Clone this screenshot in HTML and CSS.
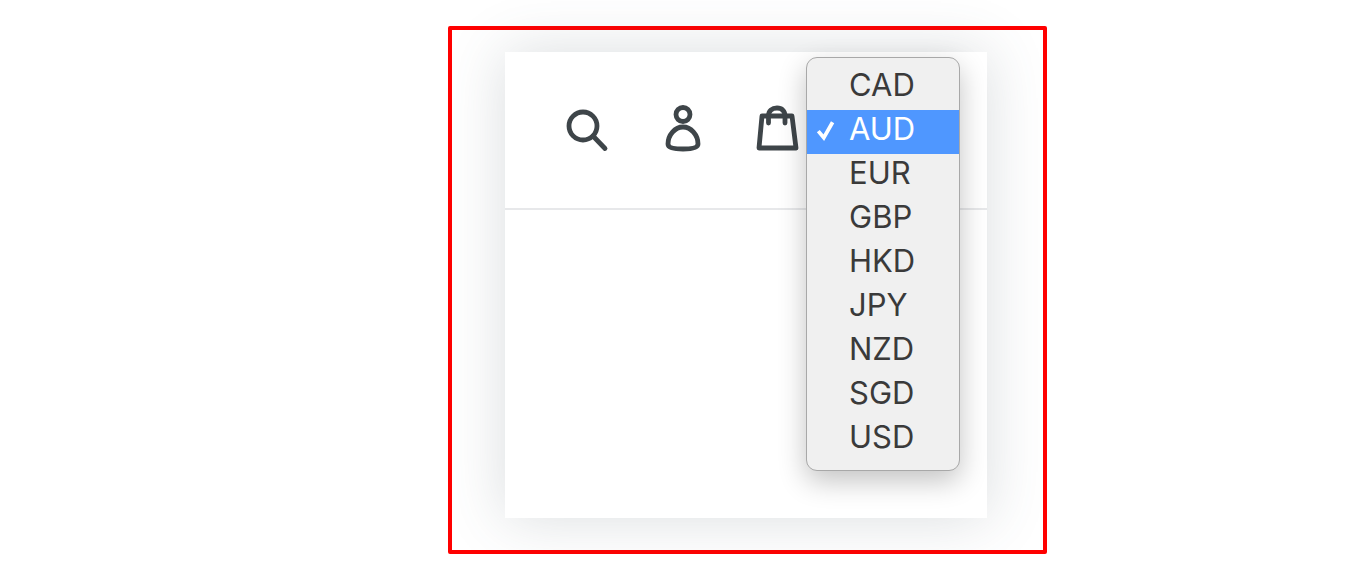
FILE: index.html
```html
<!DOCTYPE html>
<html lang="en">
<head>
    <meta charset="UTF-8">
    <meta name="viewport" content="width=device-width, initial-scale=1.0">
    <title>Currency menu</title>
    <link rel="stylesheet" href="styles.css">
</head>
<body>
    <div class="frame">
        <div class="panel">
            <div class="header">
                <svg class="icon" viewBox="0 0 48 52">
                    <circle cx="21" cy="23" r="14"/>
                    <path d="M31 33 L43 45.500"/>
                </svg>
                <svg class="icon" viewBox="0 0 48 52">
                    <circle cx="25" cy="11.500" r="7"/>
                    <path d="M25 24 C33 24 40 32 40 41 C40 44.500 35 46 25 46 C15 46 10 44.500 10 41 C10 32 17 24 25 24 Z"/>
                </svg>
                <svg class="icon" viewBox="0 0 48 52">
                    <path d="M8 13 H38 L42 45 H5 Z"/>
                    <path d="M14.500 20 V13 C14.500 8 18 5 23 5 C28 5 31 8 31 13 V20"/>
                </svg>
            </div>
            <ul class="menu">
                <li class="menu-item">CAD</li>
                <li class="menu-item selected">
                    <svg class="check" viewBox="0 0 20 20"><path d="M3 11 L8 17 L16 3"/></svg>
                    AUD
                </li>
                <li class="menu-item">EUR</li>
                <li class="menu-item">GBP</li>
                <li class="menu-item">HKD</li>
                <li class="menu-item">JPY</li>
                <li class="menu-item">NZD</li>
                <li class="menu-item">SGD</li>
                <li class="menu-item">USD</li>
            </ul>
        </div>
    </div>
</body>
</html>
```

FILE: styles.css
```css
body {
    margin: 0;
    background-color: #fff;
    font-family: "Inter", "Liberation Sans", sans-serif;
}
.frame {
    box-sizing: border-box;
    width: 599px;
    height: 528px;
    margin: 26px 0 0 448px;
    padding: 22px 0 0 53px;
    border: 4px solid #f00;
    border-radius: 2px;
}
.panel {
    position: relative;
    width: 482px;
    height: 466px;
    background-color: #fff;
    box-shadow: 0 0 56px rgba(70, 85, 95, 0.2);
}
.header {
    box-sizing: border-box;
    display: flex;
    align-items: center;
    gap: 48px;
    height: 158px;
    padding: 0 0 2px 57px;
    border-bottom: 2px solid #e7e8ea;
}
.icon {
    width: 48px;
    height: 52px;
    fill: none;
    stroke: #3e4549;
    stroke-width: 4.8;
    stroke-linecap: round;
    stroke-linejoin: round;
}
.menu {
    box-sizing: border-box;
    position: absolute;
    top: 5px;
    left: 301px;
    width: 154px;
    height: 414px;
    margin: 0;
    padding: 8px 0;
    list-style: none;
    background-color: #f0f0f0;
    border: 1px solid #a8a8a8;
    border-radius: 11px;
    box-shadow: 0 10px 28px rgba(0, 0, 0, 0.24);
}
.menu-item {
    position: relative;
    height: 44px;
    padding-left: 42px;
    font-size: 31px;
    line-height: 38px;
    color: #3a3a3a;
}
.selected {
    background-color: #4f97ff;
    color: #fff;
}
.check {
    position: absolute;
    top: 9px;
    left: 8px;
    width: 22px;
    height: 22px;
    fill: none;
    stroke: #fff;
    stroke-width: 3.4;
}
```
